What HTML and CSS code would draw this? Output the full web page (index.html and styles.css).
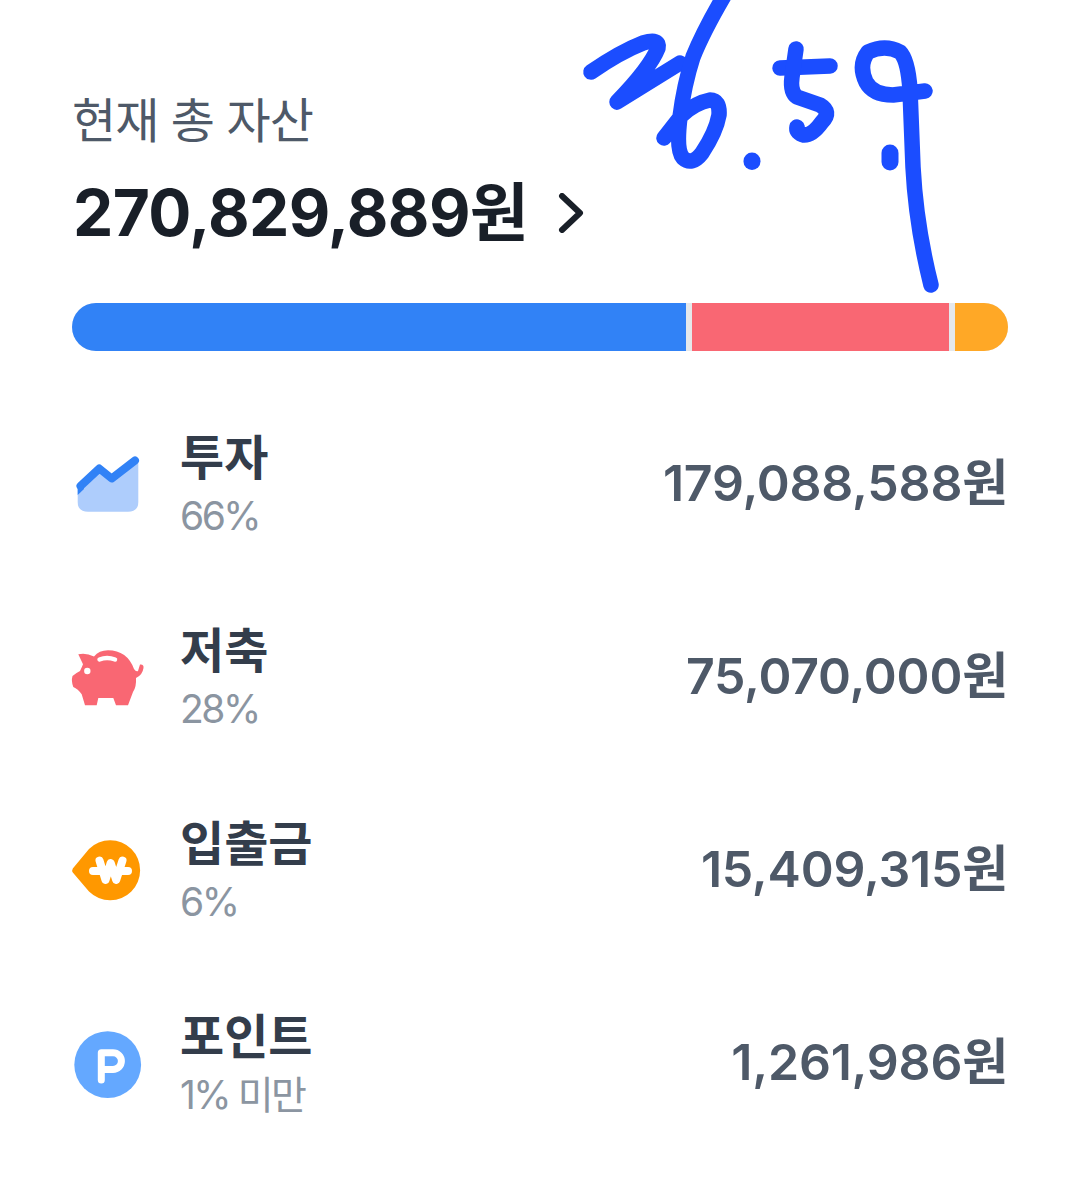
FILE: index.html
```html
<!DOCTYPE html>
<html lang="ko">
<head>
<meta charset="utf-8">
<title>현재 총 자산</title>
<link rel="stylesheet" href="styles.css">
</head>
<body>
<main class="page">
  <header class="summary">
    <div class="summary-label">현재 총 자산</div>
    <div class="summary-total">
      <span>270,829,889원</span>
      <svg class="chevron" viewBox="0 0 26 40" width="26" height="40"><path d="M4 3 L22 20 L4 37"/></svg>
    </div>
  </header>
  <div class="bar">
    <div class="seg seg-blue"></div>
    <div class="seg seg-red"></div>
    <div class="seg seg-orange"></div>
  </div>
  <ul class="rows">
    <li class="row">
      <svg class="icon" viewBox="0 0 72 72"><path class="chart-area" d="M5.7 38 L27.3 18 L39.7 28 L63 9.7 Q66.3 9 66.3 13 V54 Q66.3 63.7 56 63.7 H16 Q5.7 63.7 5.7 54 Z"/><path class="chart-line" d="M8.5 38 L27.3 20.5 L39.7 30.5 L63 12.5"/><path class="chart-cap" d="M5.7 36 L10 32 L12 41 L5.7 47 Z"/></svg>
      <div class="labels"><div class="name">투자</div><div class="pct">66%</div></div>
      <div class="amount">179,088,588원</div>
    </li>
    <li class="row">
      <svg class="icon" viewBox="0 0 72 72"><path class="pig" d="M6.3 13.3 Q14 11.5 22 15.5 Q27 9.3 36 9.3 Q55 9.3 62 28 Q64 31 66 30 L68 23.5 Q72 23 71.5 27 Q70.5 34 64 37 Q64.5 46 61 51 L56 64.3 H44 L41.3 57 H26.3 L24.7 64.3 H13 L9.7 53.3 Q6 48 1.3 46 Q-1 40 0.5 35 Q4 32 8 30 Q10 26 11 23.3 Z"/><path class="pig-slot" d="M27.5 18.5 Q35 15.5 43 18.5"/><circle class="pig-eye" cx="15.3" cy="30" r="3.2"/></svg>
      <div class="labels"><div class="name">저축</div><div class="pct">28%</div></div>
      <div class="amount">75,070,000원</div>
    </li>
    <li class="row">
      <svg class="icon" viewBox="0 0 72 72"><path class="won-drop" d="M0.8 34.5 L17 15 A30 30 0 1 1 17 57.6 L0.8 38.5 Q-0.4 36.5 0.8 34.5 Z"/><path class="won-mark" d="M27.5 26.5 L33.5 46 L38.7 29 L44.2 46 L50.5 26.5 M21 37 H56"/></svg>
      <div class="labels"><div class="name">입출금</div><div class="pct">6%</div></div>
      <div class="amount">15,409,315원</div>
    </li>
    <li class="row">
      <svg class="icon" viewBox="0 0 72 72"><circle class="point-disc" cx="35.7" cy="37.7" r="33.4"/><path class="point-mark" d="M29.3 53 V25.7 H41 A8.4 8.4 0 0 1 41 42.5 H29.3"/></svg>
      <div class="labels"><div class="name">포인트</div><div class="pct">1% 미만</div></div>
      <div class="amount">1,261,986원</div>
    </li>
  </ul>
  <svg class="scribble" viewBox="0 0 1080 310" width="1080" height="310">
    <path d="M591 72 Q620 52 643 43 Q660 38 658 48 Q650 68 617 102 L680 63"/>
    <path d="M724 -4 Q703 32 693 57 Q684 85 680 117 Q676 150 683 158 Q692 166 702 153 Q716 132 719 115 Q720 100 710 100 Q695 103 682 115 L664 138"/>
    <path d="M780 68 L830 66"/>
    <path d="M796 49 L792 77 Q790 92 797 97 L820 105 Q832 112 822 122 Q812 136 803 135 Q796 132 797 127"/>
    <path d="M925 91 L893 95 Q873 95 866 82 Q858 65 868 52 Q885 44 900 52 Q908 60 910 90 L913 167 Q916 225 931 285"/>
    <path class="scribble-dot" d="M752 161 L752 161.5"/>
    <path class="scribble-dot" d="M890 153 L890 162"/>
  </svg>
</main>
</body>
</html>
```
FILE: styles.css
```css
* { box-sizing: border-box; }
html, body { margin: 0; padding: 0; background: #fff; }
body { font-family: Inter, "Noto Sans CJK KR", sans-serif; }
.page { position: relative; width: 1080px; height: 1180px; padding: 91px 72px 0; overflow: hidden; }

.summary-label { font-size: 48px; line-height: 60px; color: #4e5968; letter-spacing: -1px; }
.summary-total { display: flex; align-items: center; gap: 30px; margin-top: 13px; height: 88px; font-size: 64px; font-weight: 700; color: #191f28; letter-spacing: -0.6px; margin-left: 1px; }
.chevron { margin-top: 10px; fill: none; stroke: #191f28; stroke-width: 6; stroke-linecap: round; stroke-linejoin: round; }

.bar { display: flex; height: 48px; margin-top: 51px; background: #e5e8eb; border-radius: 24px; overflow: hidden; gap: 6px; }
.seg { height: 100%; }
.seg-blue { width: 614px; background: #3182f6; }
.seg-red { width: 257px; background: #f96773; }
.seg-orange { flex: 1; background: #ffa826; }

.rows { list-style: none; margin: 36px 0 0; padding: 0; }
.row { display: flex; align-items: center; height: 193px; }
.icon { width: 72px; height: 72px; flex: none; overflow: visible; }
.labels { margin-left: 36px; padding-top: 3px; }
.name { font-size: 48px; line-height: 60px; font-weight: 700; color: #333d4b; }
.pct { font-size: 39px; line-height: 52px; color: #8b95a1; margin-top: 2px; letter-spacing: -2.5px; }
.amount { margin-left: auto; margin-bottom: 10px; font-size: 50px; font-weight: 600; color: #4e5968; letter-spacing: -0.2px; }

.chart-area { fill: #aecdfc; }
.chart-line { fill: none; stroke: #3182f6; stroke-width: 8; stroke-linejoin: round; stroke-linecap: round; }
.chart-cap { fill: #3182f6; }
.pig { fill: #f96773; }
.pig-slot { fill: none; stroke: #fff; stroke-width: 4.5; stroke-linecap: round; }
.pig-eye { fill: #fff; }
.won-drop { fill: #ff9800; }
.won-mark { fill: none; stroke: #fff; stroke-width: 8; stroke-linecap: round; stroke-linejoin: round; }
.point-disc { fill: #64a8ff; }
.point-mark { fill: none; stroke: #fff; stroke-width: 7; stroke-linecap: round; stroke-linejoin: round; }

.scribble { position: absolute; left: 0; top: 0; fill: none; stroke: #1b4dff; stroke-width: 15.5; stroke-linecap: round; stroke-linejoin: round; }
.scribble-dot { stroke-width: 17; }
```
